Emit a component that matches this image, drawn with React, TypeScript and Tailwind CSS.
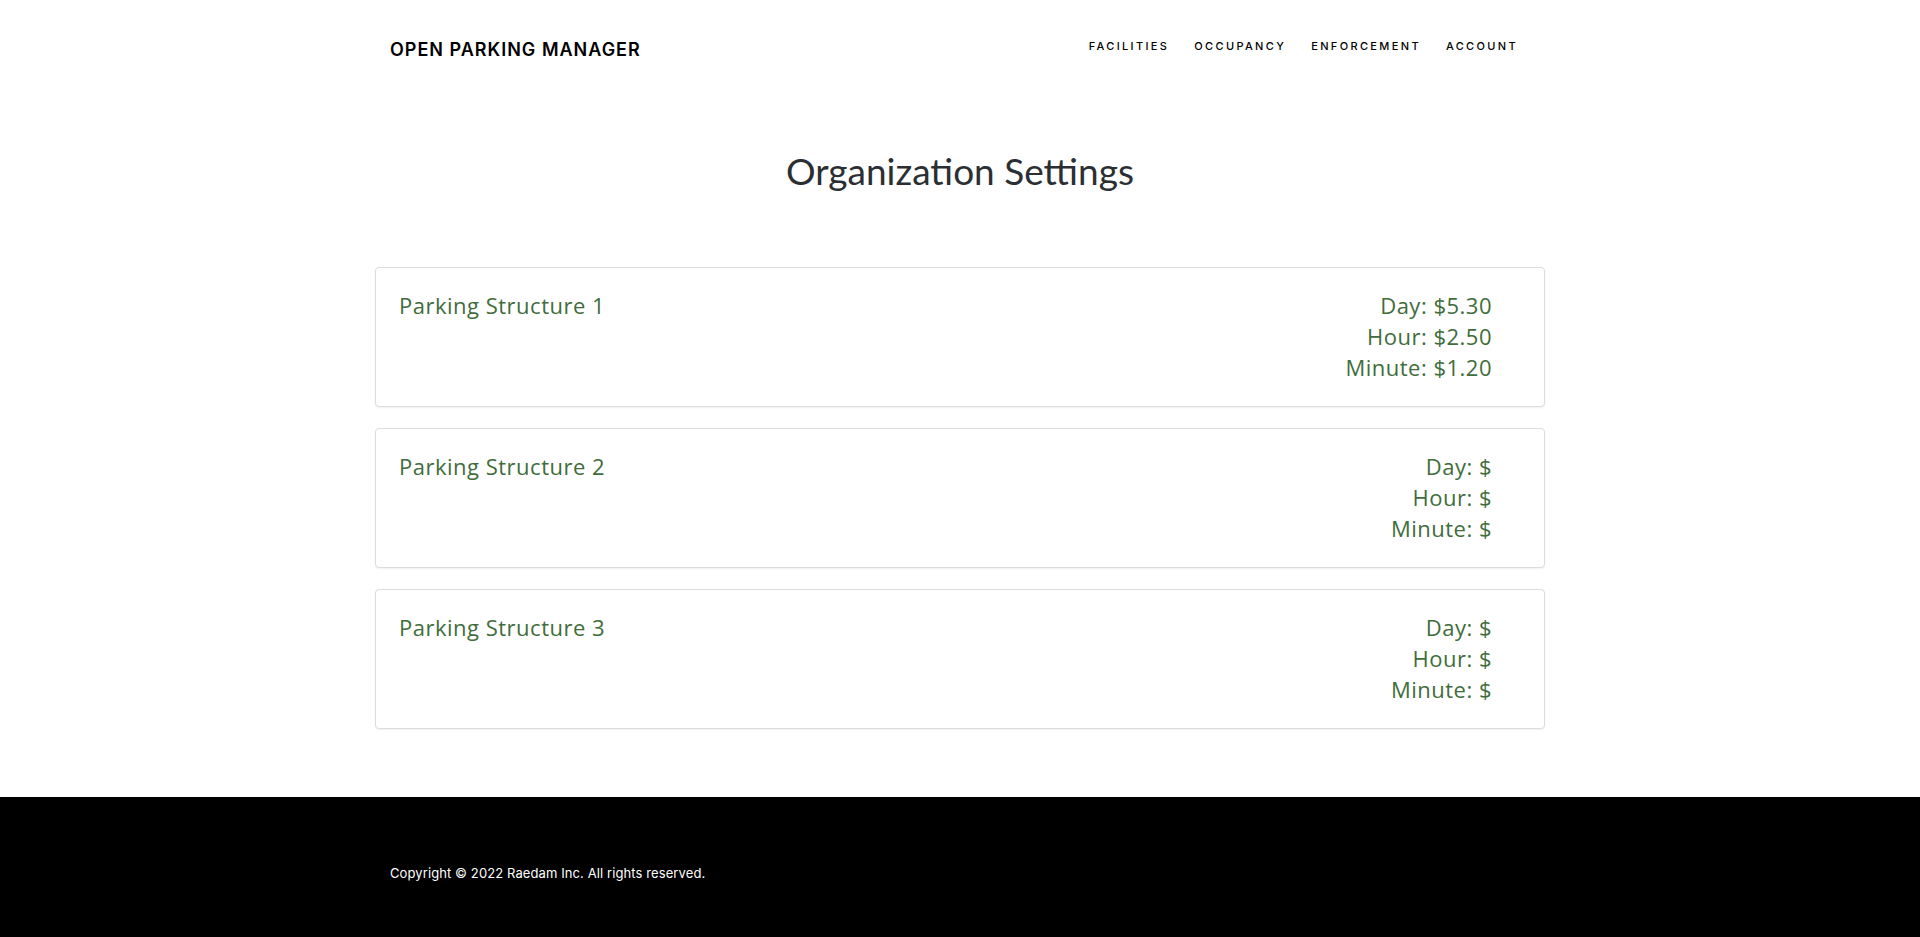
import React from "react";

interface Facility {
  name: string;
  day: string;
  hour: string;
  minute: string;
}

const facilities: Facility[] = [
  { name: "Parking Structure 1", day: "5.30", hour: "2.50", minute: "1.20" },
  { name: "Parking Structure 2", day: "", hour: "", minute: "" },
  { name: "Parking Structure 3", day: "", hour: "", minute: "" },
];

const navItems = ["Facilities", "Occupancy", "Enforcement", "Account"];

function FacilityCard({ facility }: { facility: Facility }) {
  return (
    <div className="flex justify-between rounded-[4px] border border-[#dcdcdc] bg-white pl-[23px] pr-[52px] pt-[22px] pb-[23px] font-['Open_Sans',sans-serif] tracking-[0.5px] shadow-[0_1px_2px_rgba(0,0,0,0.06)]">
      <div className="text-[22px] leading-[31px] text-[#3f6d3b]">{facility.name}</div>
      <div className="text-right text-[22px] leading-[31px] text-[#3f6d3b]">
        <div>Day: ${facility.day}</div>
        <div>Hour: ${facility.hour}</div>
        <div>Minute: ${facility.minute}</div>
      </div>
    </div>
  );
}

export default function App() {
  return (
    <div className="flex min-h-screen flex-col bg-white font-['Lato',sans-serif]">
      <header className="mx-auto flex h-[98px] w-[1170px] items-center justify-between px-[15px]">
        <a className="font-['Inter',sans-serif] text-[18px] font-semibold tracking-[1px] text-black">
          OPEN PARKING MANAGER
        </a>
        <nav className="-mt-[5px] flex items-center gap-[25px] pr-[12px]">
          {navItems.map((item) => (
            <a
              key={item}
              className="font-['Inter',sans-serif] text-[11px] font-medium uppercase tracking-[2.35px] text-black"
            >
              {item}
            </a>
          ))}
        </nav>
      </header>

      <main className="mx-auto w-[1170px] pt-[51px] pb-[67px]">
        <h1 className="mb-[75px] text-center text-[37px] leading-[43px] text-[#2b2f33]">
          Organization Settings
        </h1>
        <div className="flex flex-col gap-[21px]">
          {facilities.map((f) => (
            <FacilityCard key={f.name} facility={f} />
          ))}
        </div>
      </main>

      <footer className="mt-auto h-[140px] bg-black">
        <div className="mx-auto w-[1170px] px-[15px] pt-[66px]">
          <p className="font-['Inter',sans-serif] text-[13px] leading-[20px] tracking-[0.1px] text-white">
            Copyright © 2022 Raedam Inc. All rights reserved.
          </p>
        </div>
      </footer>
    </div>
  );
}
